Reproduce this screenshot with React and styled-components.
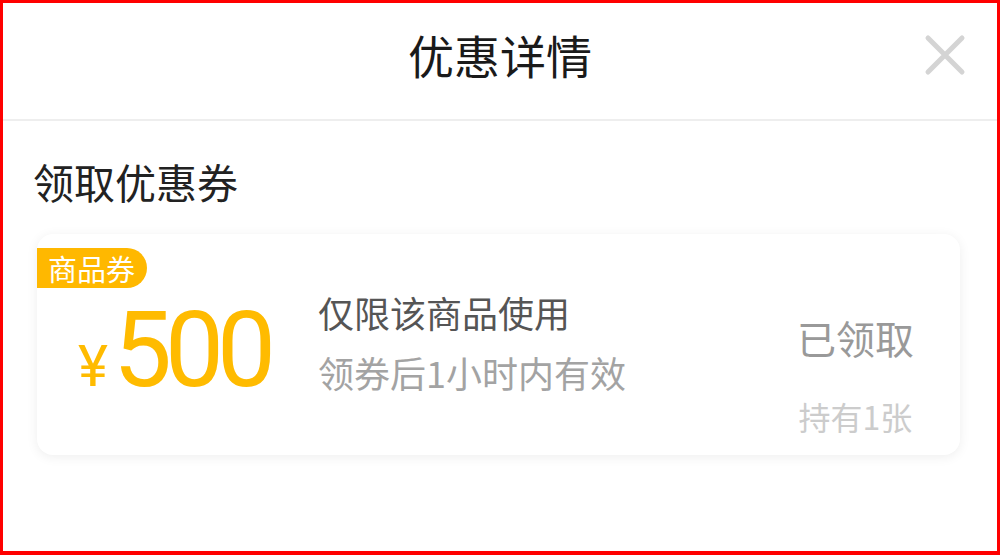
import React from "react";
import styled, { createGlobalStyle } from "styled-components";

const Global = createGlobalStyle`
  html, body { margin: 0; padding: 0; background: #fff; }
  body { font-family: "Noto Sans CJK SC", "Noto Sans", sans-serif; }
  * { box-sizing: border-box; }
`;

const Frame = styled.div`
  width: 1000px;
  height: 555px;
  border: 3px solid #ff0000;
  border-bottom-width: 4px;
  background: #fff;
  display: flex;
  flex-direction: column;
`;

const Header = styled.header`
  position: relative;
  height: 118px;
  display: flex;
  align-items: center;
  justify-content: center;
  border-bottom: 2px solid #eeeeee;
  padding-bottom: 14px;
`;

const Title = styled.h1`
  margin: 0;
  font-size: 46px;
  font-weight: 400;
  line-height: 1;
  color: #1a1a1a;
`;

const CloseButton = styled.button`
  position: absolute;
  right: 31px;
  top: 31px;
  width: 42px;
  height: 42px;
  padding: 0;
  border: 0;
  background: transparent;
  display: flex;
  align-items: center;
  justify-content: center;
`;

const Content = styled.main`
  padding: 40px 37px 0 30px;
  display: flex;
  flex-direction: column;
`;

const SectionTitle = styled.h2`
  margin: 0 0 32px 0;
  font-size: 41px;
  font-weight: 400;
  line-height: 1;
  color: #222;
`;

const Card = styled.div`
  position: relative;
  height: 221px;
  margin-left: 4px;
  background: #fff;
  border-radius: 16px;
  box-shadow: 0 2px 12px rgba(0, 0, 0, 0.07);
  display: grid;
  grid-template-columns: 281px 1fr auto;
`;

const Badge = styled.span`
  position: absolute;
  left: 0;
  top: 14px;
  height: 40px;
  padding: 0 12px 0 11px;
  background: #ffb800;
  color: #fff;
  font-size: 29px;
  line-height: 40px;
  border-radius: 0 20px 20px 0;
`;

const Amount = styled.div`
  display: flex;
  align-items: baseline;
  justify-content: center;
  padding-top: 64px;
  padding-right: 8px;
  color: #ffbb00;
  font-family: Roboto, "Noto Sans", sans-serif;
`;

const Currency = styled.span`
  font-size: 57px;
  line-height: 1;
  margin-right: 5px;
`;

const Value = styled.span`
  font-size: 105px;
  line-height: 1;
  letter-spacing: -7px;
`;

const Info = styled.div`
  padding-top: 57px;
  display: flex;
  flex-direction: column;
  gap: 17px;
`;

const Line = styled.div`
  font-size: ${(p) => p.$size}px;
  line-height: 1.2;
  color: ${(p) => p.$color};
`;

const Status = styled.div`
  padding-top: 80px;
  padding-right: 46px;
  display: flex;
  flex-direction: column;
  align-items: center;
  gap: 36px;
`;

export default function App() {
  return (
    <>
      <Global />
      <Frame>
        <Header>
          <Title>优惠详情</Title>
          <CloseButton aria-label="关闭">
            <svg width="42" height="42" viewBox="0 0 42 42">
              <path
                d="M4 4 L38 38 M38 4 L4 38"
                stroke="#d4d4d4"
                strokeWidth="5"
                strokeLinecap="round"
                fill="none"
              />
            </svg>
          </CloseButton>
        </Header>
        <Content>
          <SectionTitle>领取优惠券</SectionTitle>
          <Card>
            <Badge>商品券</Badge>
            <Amount>
              <Currency>¥</Currency>
              <Value>500</Value>
            </Amount>
            <Info>
              <Line $size={36} $color="#555555">仅限该商品使用</Line>
              <Line $size={36} $color="#a3a3a3">领券后1小时内有效</Line>
            </Info>
            <Status>
              <Line $size={39} $color="#999999">已领取</Line>
              <Line $size={32} $color="#cccccc">持有1张</Line>
            </Status>
          </Card>
        </Content>
      </Frame>
    </>
  );
}
